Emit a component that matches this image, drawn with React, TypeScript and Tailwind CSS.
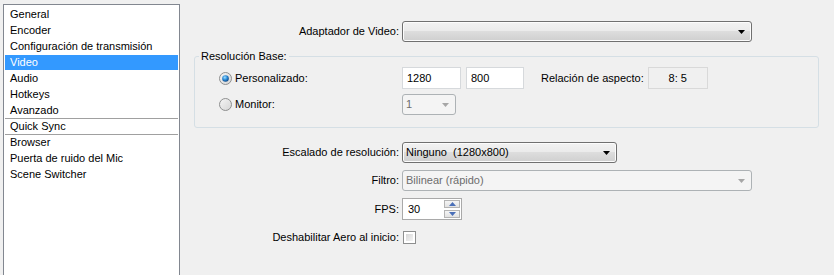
import React from "react";

const items = [
  "General",
  "Encoder",
  "Configuración de transmisión",
  "Video",
  "Audio",
  "Hotkeys",
  "Avanzado",
  "Quick Sync",
  "Browser",
  "Puerta de ruido del Mic",
  "Scene Switcher",
];

const Arrow = ({ color }: { color: string }) => (
  <svg width="7" height="4" viewBox="0 0 7 4" className="shrink-0">
    <path d="M0 0H7L3.5 4Z" fill={color} />
  </svg>
);

const Radio = ({ checked }: { checked?: boolean }) => (
  <svg width="13" height="13" viewBox="0 0 13 13" className="shrink-0">
    <defs>
      <linearGradient id={checked ? "rbg1" : "rbg0"} x1="0" y1="0" x2="1" y2="1">
        <stop offset="0" stopColor="#f6f6f6" />
        <stop offset="1" stopColor="#d4d4d4" />
      </linearGradient>
      <radialGradient id="dot" cx="0.4" cy="0.35" r="0.7">
        <stop offset="0" stopColor="#9fe0ff" />
        <stop offset="0.5" stopColor="#2a8ad8" />
        <stop offset="1" stopColor="#0b3f7a" />
      </radialGradient>
    </defs>
    <circle cx="6.5" cy="6.5" r="6" fill={`url(#${checked ? "rbg1" : "rbg0"})`} stroke="#8e8f8f" />
    {checked && <circle cx="6.5" cy="6.5" r="3.3" fill="url(#dot)" />}
  </svg>
);

function Combo({
  text,
  width,
  disabled,
}: {
  text?: string;
  width: string;
  disabled?: boolean;
}) {
  return disabled ? (
    <div
      className={`${width} h-[21px] flex items-center justify-between pl-[3px] pr-[6px] rounded-[3px] border border-[#adb2b5] bg-[#f4f4f4] text-[#6d6d6d]`}
    >
      <span className="whitespace-pre">{text}</span>
      <Arrow color="#a6a6a6" />
    </div>
  ) : (
    <div
      className={`${width} h-[21px] flex items-center justify-between pl-[3px] pr-[6px] rounded-[3px] border border-[#707070] bg-[linear-gradient(#f2f2f2_0%,#ebebeb_45%,#dddddd_50%,#cfcfcf_100%)] shadow-[inset_0_0_0_1px_#fcfcfc]`}
    >
      <span className="whitespace-pre">{text}</span>
      <Arrow color="#000" />
    </div>
  );
}

function Row({ label, children }: { label: string; children: React.ReactNode }) {
  return (
    <div className="flex items-center">
      <div className="w-[222px] text-right pr-[3px]">{label}</div>
      {children}
    </div>
  );
}

export default function App() {
  return (
    <div
      className="w-[834px] h-[275px] overflow-hidden flex bg-[#f0f0f0] text-[11px] leading-[13px] text-black"
      style={{ fontFamily: '"Liberation Sans", Arial, sans-serif' }}
    >
      {/* left list */}
      <div className="ml-[3px] mt-[4px] w-[177px] h-[300px] border border-[#828790] bg-white px-[1px] pt-[1px]">
        {items.map((it) => {
          const sel = it === "Video";
          const sep = it === "Quick Sync" || it === "Browser";
          return (
            <div
              key={it}
              className={`h-[16px] box-border pl-[5px] flex items-center whitespace-nowrap border-t ${
                sel
                  ? "border-white bg-[#3399ff] text-white"
                  : sep
                  ? "border-[#a0a0a0]"
                  : "border-white"
              }`}
            >
              {it}
            </div>
          );
        })}
      </div>

      {/* right panel */}
      <div className="flex-1 flex flex-col pt-[21px]">
        <Row label="Adaptador de Video:">
          <Combo width="w-[350px]" />
        </Row>

        <fieldset className="mt-[8px] ml-[14px] w-[625px] border border-[#d5dfe5] rounded-[3px] pl-[24px] pt-[4px] pb-[12px]">
          <legend className="ml-[-20px] px-[2px] leading-[13px]">Resolución Base:</legend>
          <div className="flex items-center h-[22px]">
            <div className="w-[183px] flex items-center gap-[3px]">
              <Radio checked />
              <span>Personalizado:</span>
            </div>
            <div className="w-[59px] h-[22px] border border-[#d6d9dc] bg-white flex items-center pl-[4px]">
              1280
            </div>
            <div className="ml-[5px] w-[58px] h-[22px] border border-[#d6d9dc] bg-white flex items-center pl-[4px]">
              800
            </div>
            <span className="ml-[17px]">Relación de aspecto:</span>
            <div className="ml-[4px] w-[60px] h-[22px] border border-[#d9d9d9] bg-[#f0f0f0] flex items-center justify-center">
              8: 5
            </div>
          </div>
          <div className="flex items-center h-[21px] mt-[5px]">
            <div className="w-[183px] flex items-center gap-[3px]">
              <Radio />
              <span>Monitor:</span>
            </div>
            <Combo width="w-[54px]" text="1" disabled />
          </div>
        </fieldset>

        <div className="mt-[14px]">
          <Row label="Escalado de resolución:">
            <Combo width="w-[215px]" text="Ninguno  (1280x800)" />
          </Row>
        </div>
        <div className="mt-[7px]">
          <Row label="Filtro:">
            <Combo width="w-[350px]" text="Bilinear (rápido)" disabled />
          </Row>
        </div>
        <div className="mt-[7px]">
          <Row label="FPS:">
            <div className="w-[60px] h-[22px] border border-[#a9a9a9] bg-white flex items-center justify-between pl-[5px] pr-[1px]">
              <span>30</span>
              <div className="flex flex-col gap-[2px]">
                {[0, 1].map((i) => (
                  <div
                    key={i}
                    className="w-[16px] h-[8px] border border-[#b4b4b4] bg-[linear-gradient(#f5f5f5,#e2e2e2)] flex items-center justify-center"
                  >
                    <svg width="7" height="4" viewBox="0 0 7 4">
                      <path d={i === 0 ? "M0 4H7L3.5 0Z" : "M0 0H7L3.5 4Z"} fill="#4a6fb8" />
                    </svg>
                  </div>
                ))}
              </div>
            </div>
          </Row>
        </div>
        <div className="mt-[11px]">
          <Row label="Deshabilitar Aero al inicio:">
            <div className="ml-[1px] w-[13px] h-[13px] border border-[#8e8f8f] bg-white p-[2px]">
              <div className="w-full h-full bg-[linear-gradient(135deg,#d6d6d6,#f4f4f4)]" />
            </div>
          </Row>
        </div>
      </div>
    </div>
  );
}
